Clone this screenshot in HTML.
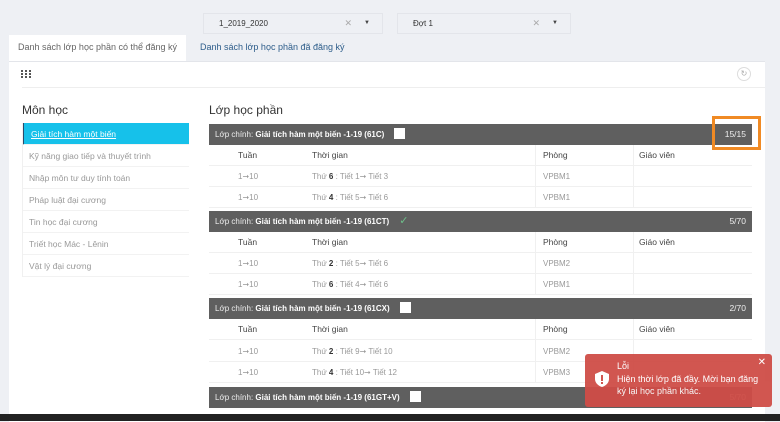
<!DOCTYPE html>
<html><head><meta charset="utf-8"><style>
*{margin:0;padding:0;box-sizing:border-box}
body{width:780px;height:421px;overflow:hidden;background:#eef0f4;font-family:"Liberation Sans",sans-serif;position:relative;color:#333}
.abs{position:absolute}
.sel{background:#eef0f4;border:1px solid #e3e5ea;height:21px;font-size:8px;line-height:19px;padding-left:15px;color:#333}
.sel .x{position:absolute;right:30px;top:0;color:#aaa;font-size:9px}
.sel .c{position:absolute;right:12px;top:0;font-size:6px;color:#444}
.tab{font-size:9px;top:35px;height:26px;line-height:24px;padding:0 9px}
.card{left:9px;top:62px;width:756px;height:360px;background:#fff}
.li{left:22px;width:167px;height:22px;font-size:8.5px;line-height:22px;padding-left:7px;color:#999;border-bottom:1px solid #f2f2f2}
.gh{left:209px;width:543px;height:21px;background:#5f5f5f;color:#eee;font-size:8px;line-height:21px;padding-left:6px}
.gh b{color:#fff}
.gh .n{position:absolute;right:6px;top:0;font-size:8.5px}
.box{display:inline-block;width:11px;height:11px;background:#fff;vertical-align:-2px;margin-left:10px}
.row{left:209px;width:543px;height:21px;font-size:8px;line-height:21px;border-bottom:1px solid #f0f0f0}
.row span{position:absolute;top:0}
.hd{color:#444;font-size:8.5px}
.dt{color:#999}
.vl{position:absolute;top:0;width:1px;height:63px;background:#f0f0f0}
</style></head><body>
<div class="abs sel" style="left:203px;top:13px;width:180px">1_2019_2020<span class="x">✕</span><span class="c">▼</span></div>
<div class="abs sel" style="left:397px;top:13px;width:174px">Đợt 1<span class="x">✕</span><span class="c">▼</span></div>
<div class="abs tab" style="left:9px;background:#fff;color:#666">Danh sách lớp học phần có thể đăng ký</div>
<div class="abs tab" style="left:191px;color:#2d5d8a">Danh sách lớp học phần đã đăng ký</div>
<div class="abs" style="left:9px;top:61px;width:756px;height:1px;background:#e3e5ea"></div>
<div class="abs card"></div>
<div class="abs" style="left:21px;top:70px;width:10px;height:8px;background:repeating-linear-gradient(90deg,#555 0 2px,transparent 2px 4px),#fff;-webkit-mask:repeating-linear-gradient(0deg,#000 0 2px,transparent 2px 3px)"></div>
<div class="abs" style="left:22px;top:87px;width:743px;height:1px;background:#eee"></div>
<div class="abs" style="left:737px;top:67px;width:14px;height:14px;border:1px solid #ddd;border-radius:50%;color:#aaa;font-size:8px;text-align:center;line-height:12px">↻</div>
<div class="abs" style="left:22px;top:103px;font-size:12px;color:#333">Môn học</div>
<div class="abs" style="left:209px;top:103px;font-size:12px;color:#333">Lớp học phần</div>
<div class="abs li" style="top:123px;background:#16c1ea;color:#fff;text-decoration:underline;border-left:2px solid #2a4a6a">Giải tích hàm một biến</div>
<div class="abs li" style="top:145px">Kỹ năng giao tiếp và thuyết trình</div>
<div class="abs li" style="top:167px">Nhập môn tư duy tính toán</div>
<div class="abs li" style="top:189px">Pháp luật đại cương</div>
<div class="abs li" style="top:211px">Tin học đại cương</div>
<div class="abs li" style="top:233px">Triết học Mác - Lênin</div>
<div class="abs li" style="top:255px">Vật lý đại cương</div>
<div class="abs" style="left:22px;top:123px;width:1px;height:154px;background:#f0f0f0"></div>

<div class="abs gh" style="top:124px">Lớp chính: <b>Giải tích hàm một biến -1-19 (61C)</b><span class="box"></span><span class="n">15/15</span></div>
<div class="abs row hd" style="top:145px"><span style="left:29px">Tuần</span><span style="left:103px">Thời gian</span><span style="left:334px">Phòng</span><span style="left:430px">Giáo viên</span></div>
<div class="abs row dt" style="top:166px"><span style="left:29px">1➞10</span><span style="left:103px">Thứ <b style="color:#333">6</b> : Tiết 1➞ Tiết 3</span><span style="left:334px">VPBM1</span></div>
<div class="abs row dt" style="top:187px"><span style="left:29px">1➞10</span><span style="left:103px">Thứ <b style="color:#333">4</b> : Tiết 5➞ Tiết 6</span><span style="left:334px">VPBM1</span></div>
<div class="vl" style="left:535px;top:145px"></div><div class="vl" style="left:633px;top:145px"></div>
<div class="abs" style="left:712px;top:116px;width:49px;height:34px;border:3px solid #f08a24"></div>

<div class="abs gh" style="top:211px">Lớp chính: <b>Giải tích hàm một biến -1-19 (61CT)</b><span style="color:#6dbf8a;margin-left:10px;font-size:11px">✓</span><span class="n">5/70</span></div>
<div class="abs row hd" style="top:232px"><span style="left:29px">Tuần</span><span style="left:103px">Thời gian</span><span style="left:334px">Phòng</span><span style="left:430px">Giáo viên</span></div>
<div class="abs row dt" style="top:253px"><span style="left:29px">1➞10</span><span style="left:103px">Thứ <b style="color:#333">2</b> : Tiết 5➞ Tiết 6</span><span style="left:334px">VPBM2</span></div>
<div class="abs row dt" style="top:274px"><span style="left:29px">1➞10</span><span style="left:103px">Thứ <b style="color:#333">6</b> : Tiết 4➞ Tiết 6</span><span style="left:334px">VPBM1</span></div>
<div class="vl" style="left:535px;top:232px"></div><div class="vl" style="left:633px;top:232px"></div>

<div class="abs gh" style="top:298px">Lớp chính: <b>Giải tích hàm một biến -1-19 (61CX)</b><span class="box"></span><span class="n">2/70</span></div>
<div class="abs row hd" style="top:319px"><span style="left:29px">Tuần</span><span style="left:103px">Thời gian</span><span style="left:334px">Phòng</span><span style="left:430px">Giáo viên</span></div>
<div class="abs row dt" style="top:341px"><span style="left:29px">1➞10</span><span style="left:103px">Thứ <b style="color:#333">2</b> : Tiết 9➞ Tiết 10</span><span style="left:334px">VPBM2</span></div>
<div class="abs row dt" style="top:362px"><span style="left:29px">1➞10</span><span style="left:103px">Thứ <b style="color:#333">4</b> : Tiết 10➞ Tiết 12</span><span style="left:334px">VPBM3</span></div>
<div class="vl" style="left:535px;top:319px"></div><div class="vl" style="left:633px;top:319px"></div>

<div class="abs gh" style="top:387px">Lớp chính: <b>Giải tích hàm một biến -1-19 (61GT+V)</b><span class="box"></span><span class="n">5/70</span></div>
<div class="abs" style="left:0;top:414px;width:780px;height:7px;background:#222"></div>

<div class="abs" style="left:585px;top:354px;width:187px;height:53px;background:#cf4d47;border-radius:3px;color:#fff;opacity:.95">
 <svg class="abs" style="left:10px;top:17px" width="14" height="16" viewBox="0 0 14 16"><path d="M7 0L14 3V8C14 12 10.5 15 7 16C3.5 15 0 12 0 8V3Z" fill="#fff"/><rect x="6" y="4" width="2" height="6" fill="#cf4d47"/><rect x="6" y="11" width="2" height="2" fill="#cf4d47"/></svg>
 <div class="abs" style="left:32px;top:7px;font-size:9px">Lỗi</div>
 <div class="abs" style="left:32px;top:19px;font-size:9px;line-height:12px;width:142px">Hiện thời lớp đã đầy. Mời bạn đăng ký lại học phần khác.</div>
 <div class="abs" style="right:6px;top:3px;font-size:10px">✕</div>
</div>
</body></html>
